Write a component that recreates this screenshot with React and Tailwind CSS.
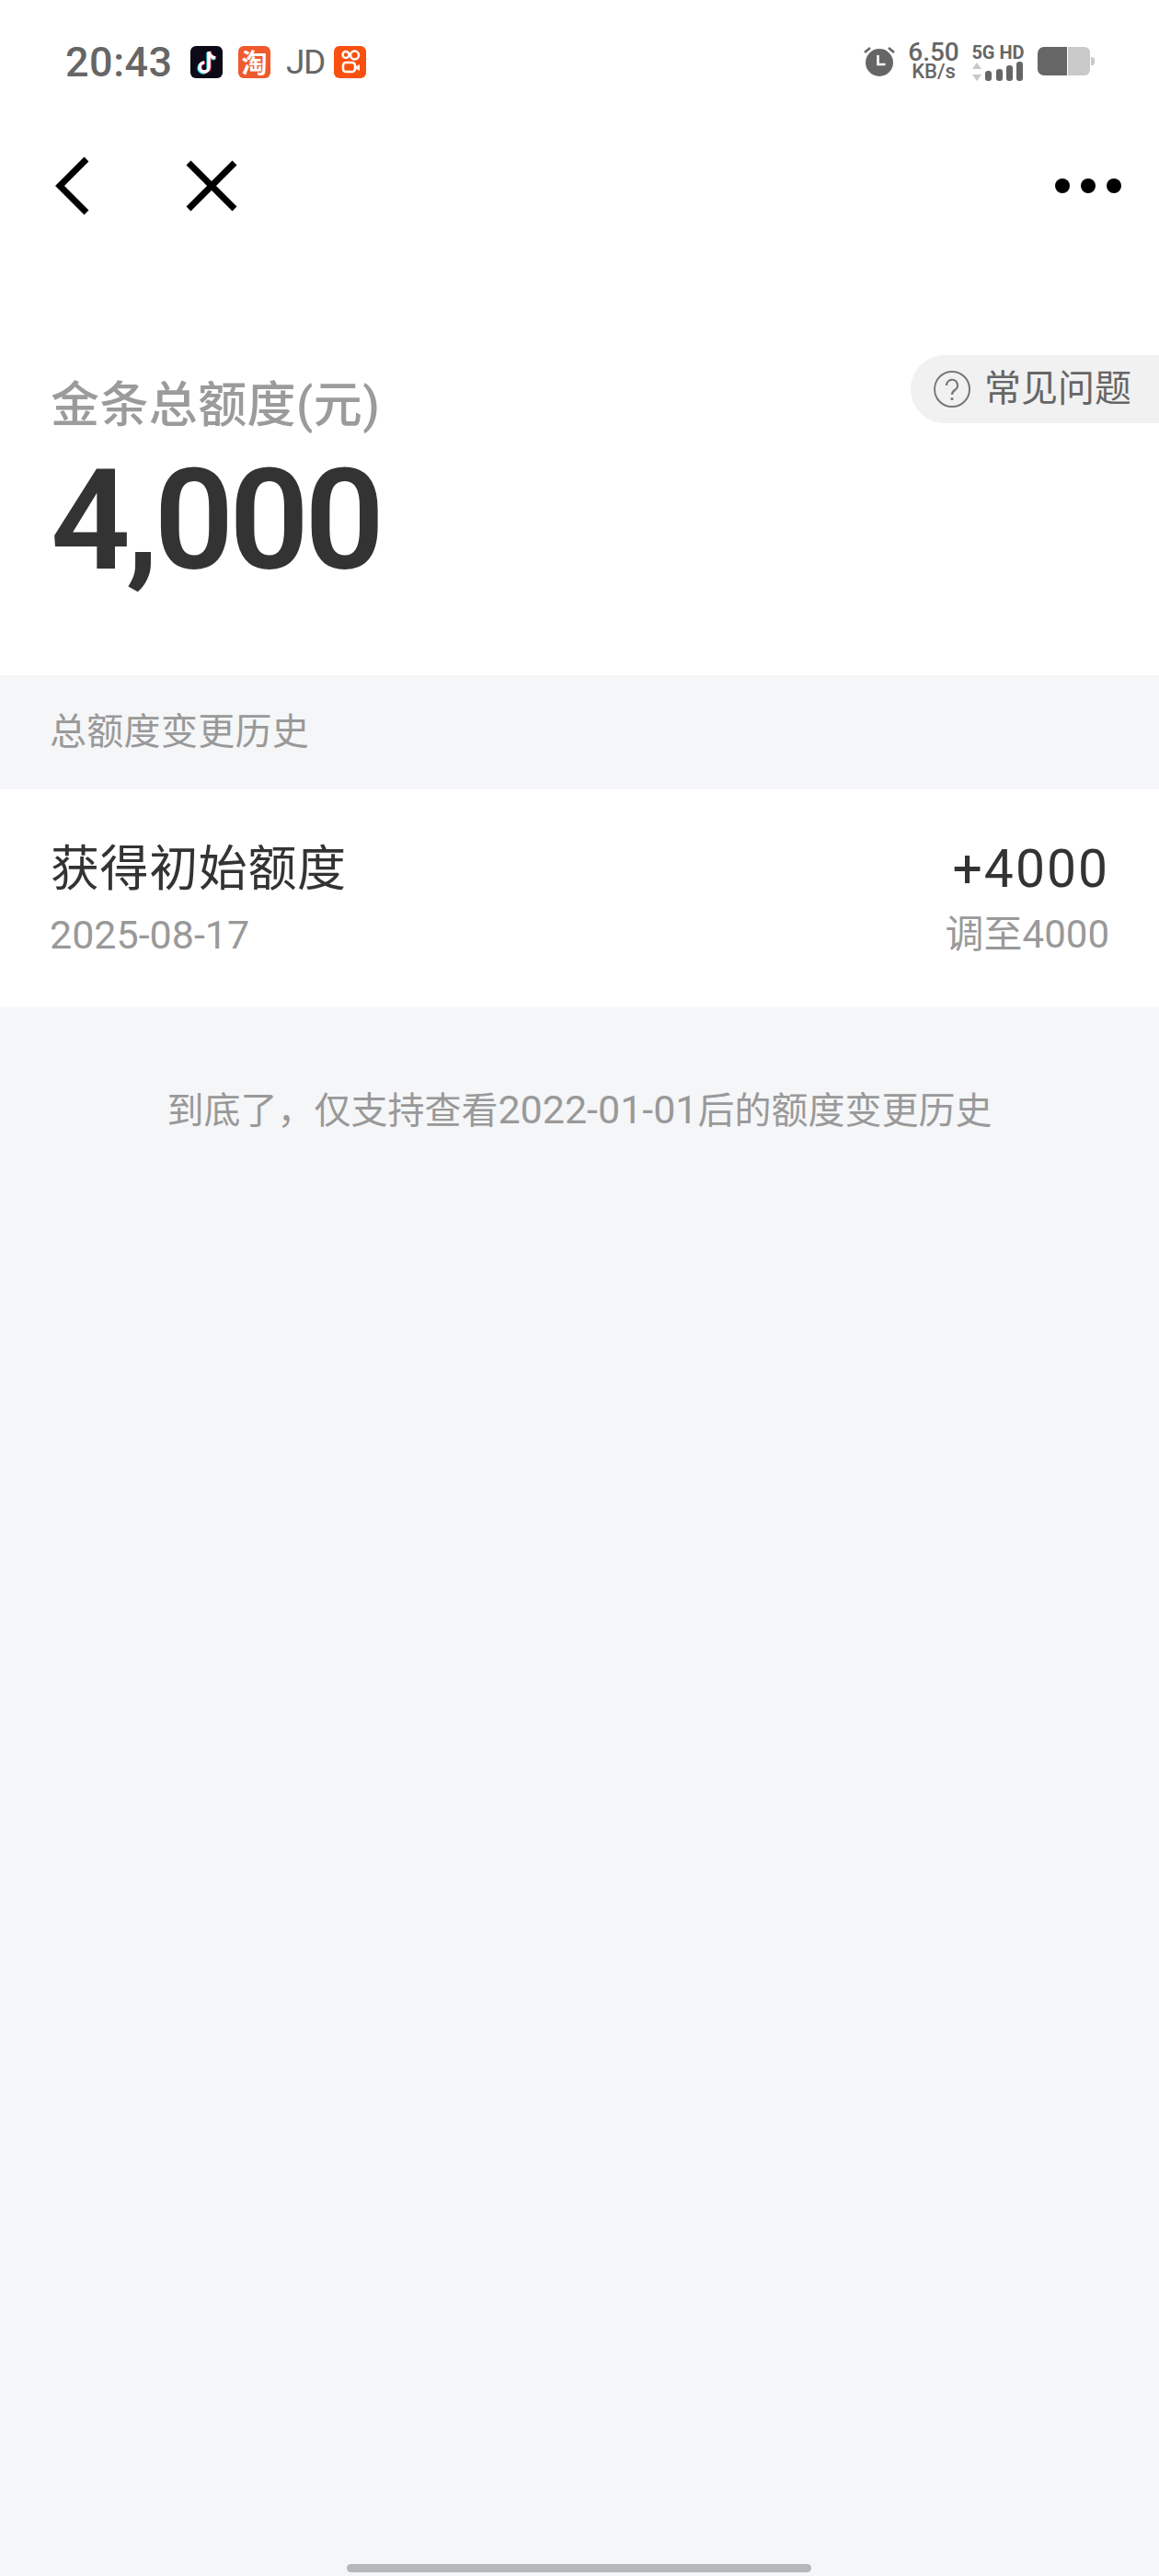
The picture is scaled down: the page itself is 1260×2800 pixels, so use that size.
const cjk = `font-['Roboto','Noto_Sans_CJK_SC',sans-serif]`;

function Alarm() {
  return (
    <svg width="36" height="36" viewBox="0 0 36 36">
      <circle cx="18" cy="19" r="15" fill="#666" />
      <path d="M16.500 11v10h8" fill="none" stroke="#fff" strokeWidth="2.600" />
      <path d="M2 8l6-5M34 8l-6-5" stroke="#666" strokeWidth="2.600" />
    </svg>
  );
}

function Signal() {
  return (
    <svg width="56" height="21" viewBox="0 0 56 21">
      <path d="M5 1l5 7H0zM5 21l5-7H0z" fill="#c8c8c8" />
      <rect x="14" y="10" width="7" height="11" rx="3" fill="#666" />
      <rect x="26" y="8" width="7" height="13" rx="3" fill="#666" />
      <rect x="37" y="4" width="7" height="17" rx="3" fill="#666" />
      <rect x="48" y="0" width="7" height="21" rx="3" fill="#666" />
    </svg>
  );
}

function Battery() {
  return (
    <svg width="64" height="32" viewBox="0 0 64 32">
      <path d="M8 0h25v31H8a7 7 0 0 1-7-7V7a7 7 0 0 1 7-7z" fill="#666" />
      <path d="M34 0h18a6 6 0 0 1 6 6v19a6 6 0 0 1-6 6H34z" fill="#c9c9c9" />
      <path d="M59 11h1a3 3 0 0 1 3 3v3a3 3 0 0 1-3 3h-1z" fill="#c9c9c9" />
    </svg>
  );
}

function TikTok() {
  const d = "M20 6v17a5 5 0 1 1-5-5M20 6c.5 4 3.500 6.500 7 7";
  return (
    <svg width="35" height="35" viewBox="0 0 35 35">
      <rect width="35" height="35" rx="6" fill="#0c0a16" />
      <path d={d} transform="translate(-1 1)" fill="none" stroke="#25d5dc" strokeWidth="3.400" />
      <path d={d} transform="translate(1 0)" fill="none" stroke="#f0305a" strokeWidth="3.400" />
      <path d={d} fill="none" stroke="#fff" strokeWidth="3.400" />
    </svg>
  );
}

function Kuaishou() {
  return (
    <svg width="35" height="35" viewBox="0 0 35 35">
      <rect width="35" height="35" rx="6" fill="#f9500f" />
      <circle cx="13" cy="9.500" r="3.500" fill="none" stroke="#fff" strokeWidth="2.500" />
      <circle cx="22.500" cy="10" r="4.500" fill="none" stroke="#fff" strokeWidth="2.500" />
      <rect x="10" y="18" width="13" height="10" rx="3" fill="none" stroke="#fff" strokeWidth="2.500" />
      <path d="M23 23l5-3v7l-5-3z" fill="#fff" />
    </svg>
  );
}

function StatusBar() {
  return (
    <div className="h-[134px] flex items-center justify-between pl-[71px] pr-[69px]">
      <div className="flex items-center">
        <span className="font-['Roboto',sans-serif] font-medium text-[45px] leading-none text-[#666] tracking-[0.5px] w-[135px]">20:43</span>
        <div className="flex items-center gap-[17px] ml-[1px]">
          <TikTok />
          <div className="w-[35px] h-[35px] rounded-[6px] bg-[#ee5a2c] flex items-center justify-center text-white text-[28px] leading-none font-bold font-['Noto_Sans_CJK_SC',sans-serif]">淘</div>
          <span className="w-[35px] font-['Roboto',sans-serif] text-[37px] leading-none text-[#666] tracking-[-1.5px] text-center">JD</span>
          <Kuaishou />
        </div>
      </div>
      <div className="flex items-center">
        <Alarm />
        <div className="flex flex-col items-center w-[58px] ml-[12px] font-['Roboto',sans-serif] text-[#666] font-medium">
          <span className="text-[28px] leading-[22px]">6.50</span>
          <span className="text-[22px] leading-[20px]">KB/s</span>
        </div>
        <div className="flex flex-col items-center ml-[12px] w-[58px]">
          <span className="font-['Roboto',sans-serif] font-bold text-[20px] leading-[20px] text-[#666] whitespace-nowrap">5G HD</span>
          <Signal />
        </div>
        <div className="ml-[13px]"><Battery /></div>
      </div>
    </div>
  );
}

function Nav() {
  return (
    <div className="h-[136px] flex items-center justify-between pl-[58px] pr-[41px]">
      <div className="flex items-center gap-[104px]">
        <svg width="40" height="64" viewBox="0 0 40 64"><path d="M36 3L7 32l29 29" fill="none" stroke="#000" strokeWidth="7" /></svg>
        <svg width="56" height="56" viewBox="0 0 56 56"><path d="M3 3l50 50M53 3L3 53" fill="none" stroke="#000" strokeWidth="7" /></svg>
      </div>
      <div className="flex items-center gap-[12px]">
        <span className="w-[16px] h-[16px] rounded-full bg-black" />
        <span className="w-[16px] h-[16px] rounded-full bg-black" />
        <span className="w-[16px] h-[16px] rounded-full bg-black" />
      </div>
    </div>
  );
}

export default function App() {
  return (
    <div className={`relative w-[1260px] h-[2800px] bg-[#f5f6f8] overflow-hidden ${cjk}`}>
      <div className="bg-white h-[734px]">
        <StatusBar />
        <Nav />
        <div className="relative pl-[55px]">
          <div className="pt-[135px] text-[53px] leading-[72px] font-medium text-[#9b9b9b] tracking-[0.4px]">金条总额度(元)</div>
          <div className="mt-[14px] font-['Roboto',sans-serif] font-semibold text-[152px] leading-[150px] text-[#333] tracking-[-5px]">4,000</div>
          <div className="absolute right-0 top-[116px] w-[270px] h-[74px] rounded-l-[37px] bg-[#f1f1f1] flex items-center pl-[24px] gap-[14px]">
            <svg width="42" height="42" viewBox="0 0 42 42">
              <circle cx="21" cy="21" r="19" fill="none" stroke="#777" strokeWidth="2" />
              <path d="M15 17a6 6 0 1 1 9 5c-2 1.500-3 2.500-3 5" fill="none" stroke="#777" strokeWidth="2.200" />
              <circle cx="21" cy="31.500" r="1.600" fill="#777" />
            </svg>
            <span className="text-[40px] leading-none text-[#666]">常见问题</span>
          </div>
        </div>
      </div>
      <div className="h-[124px] flex items-center pl-[54px] text-[40px] text-[#999] tracking-[0.3px]">总额度变更历史</div>
      <div className="bg-white h-[237px] flex justify-between px-[54px] pt-[57px]">
        <div>
          <div className="text-[53px] leading-[60px] text-[#333] pl-[1px] tracking-[0.6px]">获得初始额度</div>
          <div className="mt-[16px] text-[43px] leading-[50px] text-[#999]">2025-08-17</div>
        </div>
        <div className="text-right">
          <div className="text-[57px] leading-[60px] text-[#333] tracking-[2px]">+4000</div>
          <div className="mt-[16px] text-[42px] leading-[50px] text-[#999]">调至4000</div>
        </div>
      </div>
      <div className="pt-[86px] text-center text-[40px] leading-[50px] text-[#999]">到底了，仅支持查看<span className="text-[43px]">2022-01-01</span>后的额度变更历史</div>
      <div className="absolute left-[377px] top-[2787px] w-[505px] h-[9px] rounded-full bg-[#b6b7b9]" />
    </div>
  );
}
